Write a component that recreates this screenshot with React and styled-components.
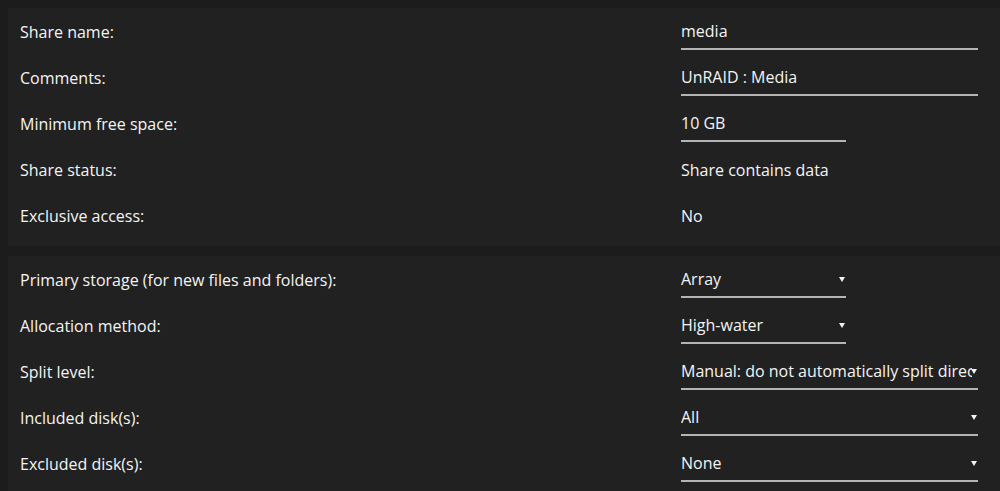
import React from "react";
import styled, { createGlobalStyle } from "styled-components";

const GlobalStyle = createGlobalStyle`
  html, body {
    margin: 0;
    padding: 0;
    background: #1c1c1c;
    overflow: hidden;
  }
  body {
    font-family: "Open Sans", "DejaVu Sans", sans-serif;
    font-size: 16px;
    color: #f4f4f4;
  }
`;

const Page = styled.div`
  display: flex;
  flex-direction: column;
  gap: 10px;
  padding: 8px 0 0 8px;
`;

const Panel = styled.section`
  background: #212121;
  padding: 0 0 8px 12px;
`;

const Row = styled.div`
  box-sizing: border-box;
  display: grid;
  grid-template-columns: 661px 1fr;
  align-items: center;
  height: 46px;
  padding-top: 2px;
`;

const Label = styled.div`
  white-space: nowrap;
`;

const Text = styled.div`
  white-space: nowrap;
`;

const Field = styled.div`
  position: relative;
  box-sizing: border-box;
  width: ${({ $width }) => $width}px;
  height: 36px;
  display: flex;
  align-items: center;
  border-bottom: 2px solid #b4b4b4;

  ${({ $select }) =>
    $select &&
    `
    &:after {
      content: "";
      position: absolute;
      right: 1px;
      top: 15px;
      border-left: 3.5px solid transparent;
      border-right: 3.5px solid transparent;
      border-top: 5px solid #f4f4f4;
    }
  `}
`;

const Value = styled.span`
  flex: 1;
  min-width: 0;
  overflow: hidden;
  white-space: nowrap;
  margin-right: ${({ $select }) => ($select ? "6px" : "0")};
`;

const top = [
  { label: "Share name:", value: "media", kind: "input", width: 297 },
  { label: "Comments:", value: "UnRAID : Media", kind: "input", width: 297 },
  { label: "Minimum free space:", value: "10 GB", kind: "input", width: 165 },
  { label: "Share status:", value: "Share contains data", kind: "text" },
  { label: "Exclusive access:", value: "No", kind: "text" },
];

const bottom = [
  { label: "Primary storage (for new files and folders):", value: "Array", kind: "select", width: 165 },
  { label: "Allocation method:", value: "High-water", kind: "select", width: 165 },
  { label: "Split level:", value: "Manual: do not automatically split directories", kind: "select", width: 297 },
  { label: "Included disk(s):", value: "All", kind: "select", width: 297 },
  { label: "Excluded disk(s):", value: "None", kind: "select", width: 297 },
];

const Setting = ({ label, value, kind, width }) => (
  <Row>
    <Label>{label}</Label>
    {kind === "text" ? (
      <Text>{value}</Text>
    ) : (
      <Field $width={width} $select={kind === "select"}>
        <Value $select={kind === "select"}>{value}</Value>
      </Field>
    )}
  </Row>
);

export default function App() {
  return (
    <>
      <GlobalStyle />
      <Page>
        <Panel>
          {top.map((s) => (
            <Setting key={s.label} {...s} />
          ))}
        </Panel>
        <Panel>
          {bottom.map((s) => (
            <Setting key={s.label} {...s} />
          ))}
        </Panel>
      </Page>
    </>
  );
}
